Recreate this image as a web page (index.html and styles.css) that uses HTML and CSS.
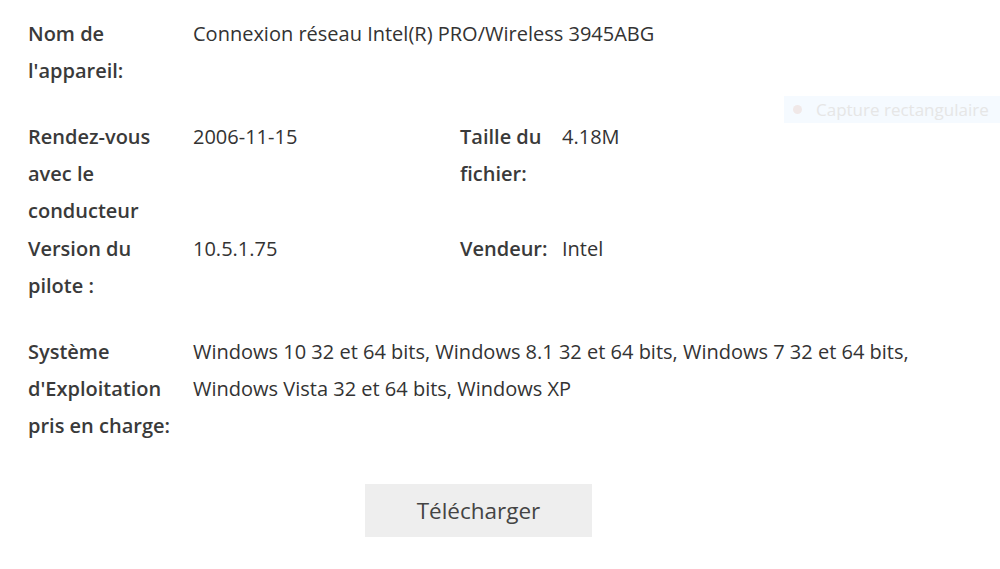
FILE: index.html
```html
<!DOCTYPE html>
<html lang="fr">
<head>
<meta charset="utf-8">
<title>Pilote</title>
<link rel="stylesheet" href="styles.css">
</head>
<body>
<div class="page">
  <div class="row">
    <div class="label">Nom de l'appareil:</div>
    <div class="value wide">Connexion réseau Intel(R) PRO/Wireless 3945ABG</div>
  </div>
  <div class="row">
    <div class="label">Rendez-vous avec le conducteur</div>
    <div class="value">2006-11-15</div>
    <div class="label2">Taille du fichier:</div>
    <div class="value2">4.18M</div>
  </div>
  <div class="row">
    <div class="label">Version du pilote :</div>
    <div class="value">10.5.1.75</div>
    <div class="label2">Vendeur:</div>
    <div class="value2">Intel</div>
  </div>
  <div class="row">
    <div class="label">Système d'Exploitation pris en charge:</div>
    <div class="value wide">Windows 10 32 et 64 bits, Windows 8.1 32 et 64 bits, Windows 7 32 et 64 bits, Windows Vista 32 et 64 bits, Windows XP</div>
  </div>
  <div class="actions">
    <button class="download">Télécharger</button>
  </div>
</div>
<div class="capture"><span class="dot"></span>Capture rectangulaire</div>
</body>
</html>
```

FILE: styles.css
```css
html, body {
  margin: 0;
  padding: 0;
  background: #ffffff;
}
body {
  font-family: "Open Sans", "Noto Sans", sans-serif;
  font-size: 20px;
  color: #333333;
}
.page {
  width: 901px;
  padding: 15px 28px 0 28px;
}
.row {
  display: flex;
  align-items: flex-start;
  min-height: 102px;
  padding-bottom: 1px;
  line-height: 37px;
}
.label {
  width: 152px;
  flex: 0 0 152px;
  margin-right: 13px;
  font-weight: 600;
  color: #3a3a3a;
}
.value {
  width: 267px;
  flex: 0 0 267px;
}
.value.wide {
  flex: 1 1 auto;
  width: auto;
}
.label2 {
  width: 92px;
  flex: 0 0 92px;
  margin-right: 10px;
  font-weight: 600;
  color: #3a3a3a;
}
.value2 {
  flex: 1 1 auto;
}
.actions {
  display: flex;
  justify-content: center;
  margin-top: 39px;
}
.download {
  width: 227px;
  height: 53px;
  border: none;
  background: #eeeeee;
  color: #444444;
  font-family: "Open Sans", "Noto Sans", sans-serif;
  font-size: 22.5px;
  padding: 0;
}
.capture {
  position: absolute;
  left: 784px;
  top: 96px;
  width: 216px;
  height: 27px;
  background: #f5faff;
  color: #e6e6e6;
  font-family: "Open Sans", sans-serif;
  font-size: 17px;
  line-height: 27px;
  display: flex;
  align-items: center;
}
.dot {
  width: 9px;
  height: 9px;
  border-radius: 50%;
  background: #f0e8e8;
  margin: 0 14px 0 9px;
}
```
